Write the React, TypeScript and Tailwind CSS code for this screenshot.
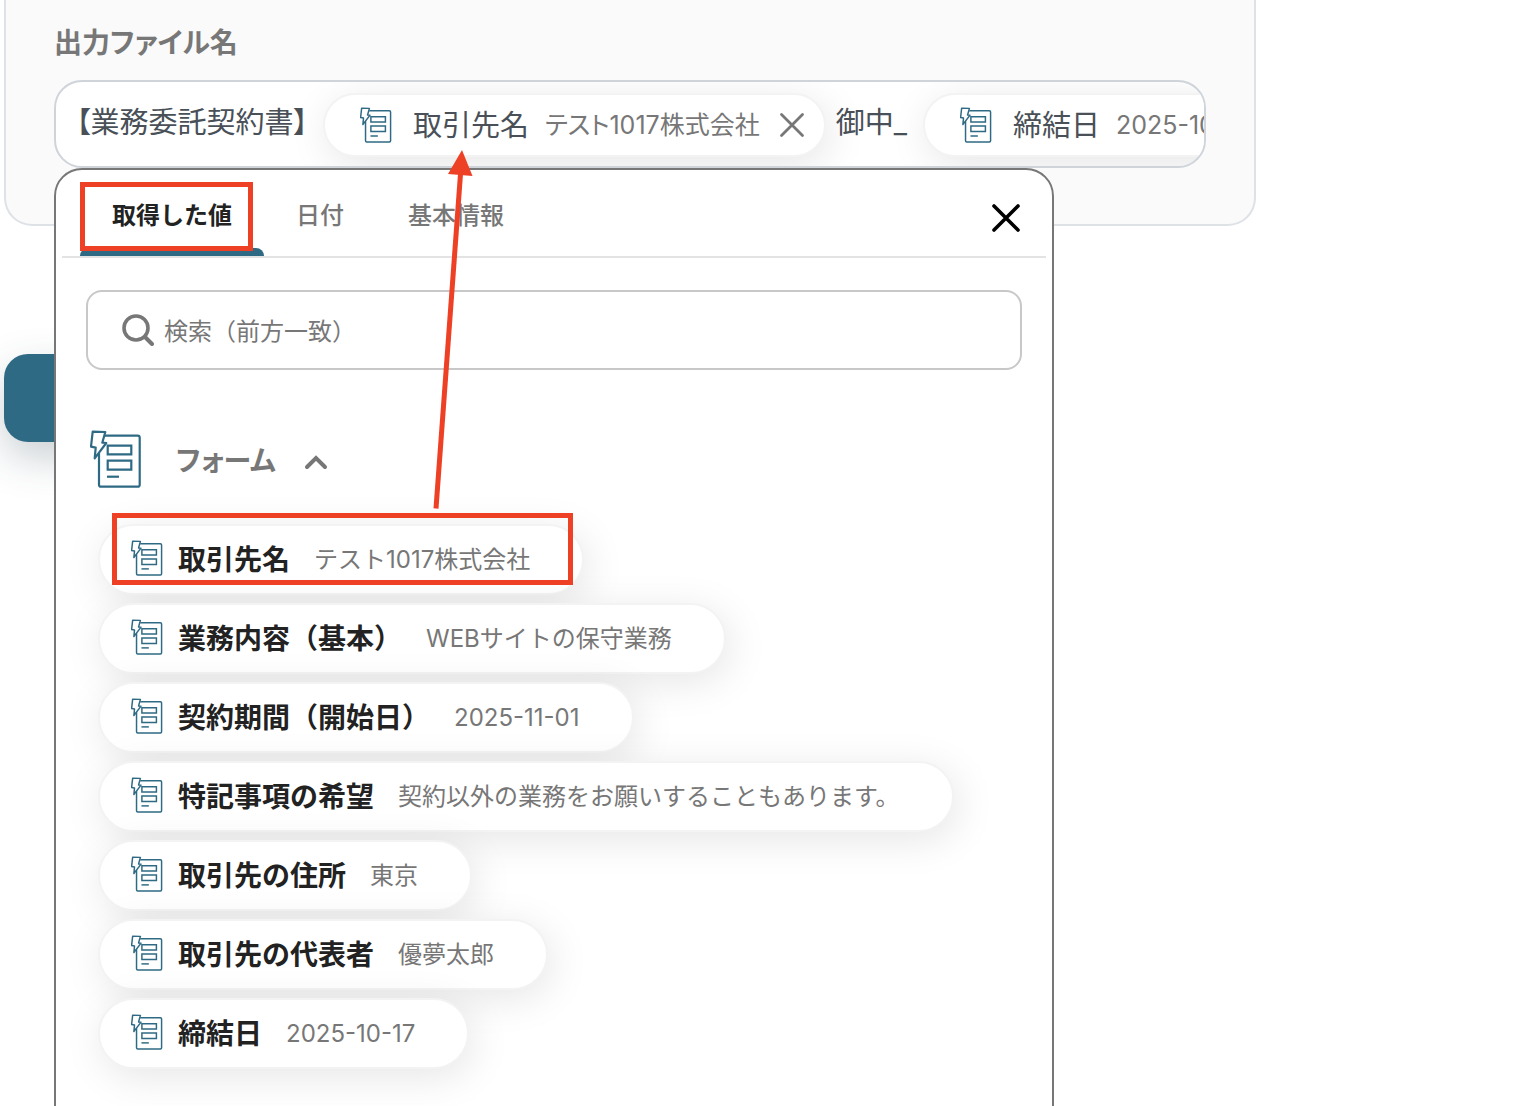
import { useState } from "react";

const tabs = ["取得した値", "日付", "基本情報"];

const fields = [
  { label: "取引先名", value: "テスト1017株式会社" },
  { label: "業務内容（基本）", value: "WEBサイトの保守業務" },
  { label: "契約期間（開始日）", value: "2025-11-01" },
  { label: "特記事項の希望", value: "契約以外の業務をお願いすることもあります。" },
  { label: "取引先の住所", value: "東京" },
  { label: "取引先の代表者", value: "優夢太郎" },
  { label: "締結日", value: "2025-10-17" },
];

function FormIcon({ className, stroke }: { className: string; stroke: number }) {
  return (
    <svg
      viewBox="0 0 52 58"
      className={`shrink-0 text-[#2f6a84] ${className}`}
      fill="none"
      stroke="currentColor"
      strokeWidth={stroke}
      aria-hidden="true"
    >
      <path d="M15 5.7H47.7a2 2 0 0 1 2 2V54.7a2 2 0 0 1-2 2H11a2 2 0 0 1-2-2V23" />
      <path d="M2.7 1.7 15.3 2 12.3 12.7 16.3 13 4.7 28.3 5.7 17.7 1 16.7Z" strokeLinejoin="round" />
      <path d="M17.7 15.7H41.3V24.3H17.7ZM17.7 30.7H41.3V39.7H17.7Z" />
      <path d="M17 46.7H29" />
    </svg>
  );
}

function CloseIcon({ className, stroke }: { className: string; stroke: number }) {
  return (
    <svg
      viewBox="0 0 32 32"
      className={className}
      fill="none"
      stroke="currentColor"
      strokeWidth={stroke}
      strokeLinecap="round"
      aria-hidden="true"
    >
      <path d="M4 4 28 28M28 4 4 28" />
    </svg>
  );
}

function InlineChip({ label, value }: { label: string; value: string }) {
  return (
    <span className="flex h-16 shrink-0 items-center rounded-full border-2 border-[#f3f3f3] bg-white pl-[35px] pr-[18px] shadow-[4px_8px_40px_rgba(0,0,0,0.1)]">
      <FormIcon className="h-9 w-8" stroke={2.4} />
      <span className="ml-[21px] pt-0.5 text-[29px] text-[#495057]">{label}</span>
      <span className="ml-4 pt-0.5 text-[25px] text-[#777777]">{value}</span>
      <button type="button" aria-label={`${label}を削除`} className="ml-[18px] text-[#777777]">
        <CloseIcon className="size-7" stroke={3.2} />
      </button>
    </span>
  );
}

function FileNameField() {
  return (
    <div
      role="textbox"
      aria-labelledby="file-name-label"
      className="flex h-[88px] items-center overflow-hidden whitespace-nowrap rounded-[28px] border-2 border-[#ced4da] bg-white pl-5 pt-0.5 text-[29px] text-[#495057] [font-feature-settings:'palt']"
    >
      <span className="shrink-0 pb-1">【業務委託契約書】</span>
      <span className="ml-[15px] flex shrink-0">
        <InlineChip label="取引先名" value="テスト1017株式会社" />
      </span>
      <span className="ml-2.5 mr-4 shrink-0 pb-1">御中_</span>
      <InlineChip label="締結日" value="2025-10-17" />
    </div>
  );
}

function ValuePicker() {
  const [active, setActive] = useState(tabs[0]);
  return (
    <div className="absolute left-0 top-full z-10 h-screen w-[1000px] rounded-t-[28px] border-2 border-[#777777] bg-white">
      <div className="mx-1.5 flex h-[88px] items-stretch border-b-2 border-[#e3e3e3] pl-[18px] pr-6">
        <div role="tablist" className="flex grow">
          {tabs.map((tab) => (
            <button
              key={tab}
              type="button"
              role="tab"
              aria-selected={tab === active}
              onClick={() => setActive(tab)}
              className={`relative px-8 pt-1.5 text-2xl ${
                tab === active ? "font-bold text-[#222222]" : "font-medium text-[#777777]"
              }`}
            >
              {tab}
              {tab === active && (
                <span className="absolute inset-x-0 bottom-0 h-2 rounded-t-lg bg-[#2f6a84]" />
              )}
            </button>
          ))}
        </div>
        <button type="button" aria-label="閉じる" className="pt-2.5 text-black">
          <CloseIcon className="size-8" stroke={3.6} />
        </button>
      </div>

      <label className="mx-[30px] mt-8 flex h-20 items-center rounded-2xl border-2 border-[#c8c8c8] px-[34px]">
        <svg viewBox="0 0 32 32" className="size-8 shrink-0 text-[#777777]" fill="none" stroke="currentColor" aria-hidden="true">
          <circle cx="14" cy="14" r="12" strokeWidth="3.6" />
          <path d="M23 23 30 30" strokeWidth="4" strokeLinecap="round" />
        </svg>
        <input
          type="search"
          aria-label="検索"
          placeholder="検索（前方一致）"
          className="ml-2.5 grow pt-1 text-2xl outline-none placeholder:text-[#777777]"
        />
      </label>

      <button type="button" aria-expanded="true" className="ml-[34px] mt-[60px] flex items-center text-[#777777]">
        <FormIcon className="h-[58px] w-[52px]" stroke={2.2} />
        <span className="ml-[34px] pt-1 text-[28px] font-bold leading-10 [font-feature-settings:'palt']">フォーム</span>
        <svg viewBox="0 0 24 16" className="ml-7 mt-1.5 h-4 w-6" fill="none" stroke="currentColor" strokeWidth="4" strokeLinecap="round" aria-hidden="true">
          <path d="M3 13 12 4 21 13" />
        </svg>
      </button>

      <ul className="ml-[42px] mt-9 flex flex-col items-start gap-2">
        {fields.map(({ label, value }) => (
          <li key={label}>
            <button
              type="button"
              className="flex h-[71px] items-center whitespace-nowrap rounded-full border-2 border-[#f3f3f3] bg-white pl-[31px] pr-[52px] shadow-[4px_8px_40px_rgba(0,0,0,0.1)]"
            >
              <FormIcon className="mb-1 h-9 w-8" stroke={2.4} />
              <span className="ml-[15px] text-[28px] font-bold text-[#222222]">{label}</span>
              <span className="ml-6 text-2xl text-[#777777]">{value}</span>
            </button>
          </li>
        ))}
      </ul>
    </div>
  );
}

// Red frames and arrow that point out the steps
function Annotations() {
  return (
    <div className="pointer-events-none absolute inset-0 z-20">
      <div className="absolute left-20 top-[182px] h-[69px] w-[173px] border-5 border-[#ee4025]" />
      <div className="absolute left-28 top-[513px] h-[72px] w-[461px] border-5 border-[#ee4025]" />
      <svg viewBox="0 0 40 360" className="absolute left-[433px] top-[150px] h-[360px] w-10 text-[#ee4025]" aria-hidden="true">
        <path d="M3 358.5 27.5 24" stroke="currentColor" strokeWidth="5" />
        <path d="M29 0 39.5 26 15 24Z" fill="currentColor" />
      </svg>
    </div>
  );
}

function App() {
  return (
    <main className="relative h-screen overflow-hidden bg-white px-1 font-['Inter','Noto_Sans_CJK_JP',sans-serif]">
      <section className="max-w-[1252px] rounded-b-[28px] border-2 border-t-0 border-[#dee2e6] bg-[#fafafa] px-12 pb-14 pt-[22px]">
        <h2 id="file-name-label" className="mb-4 text-[28px] font-bold leading-[42px] text-[#777777] [font-feature-settings:'palt']">
          出力ファイル名
        </h2>
        <div className="relative">
          <FileNameField />
          <ValuePicker />
        </div>
      </section>
      <button
        type="button"
        aria-label="保存"
        className="mt-32 block h-[88px] w-80 rounded-3xl bg-[#2f6a84] shadow-[0_16px_40px_rgba(47,70,84,0.25)]"
      />
      <Annotations />
    </main>
  );
}

export default App;
